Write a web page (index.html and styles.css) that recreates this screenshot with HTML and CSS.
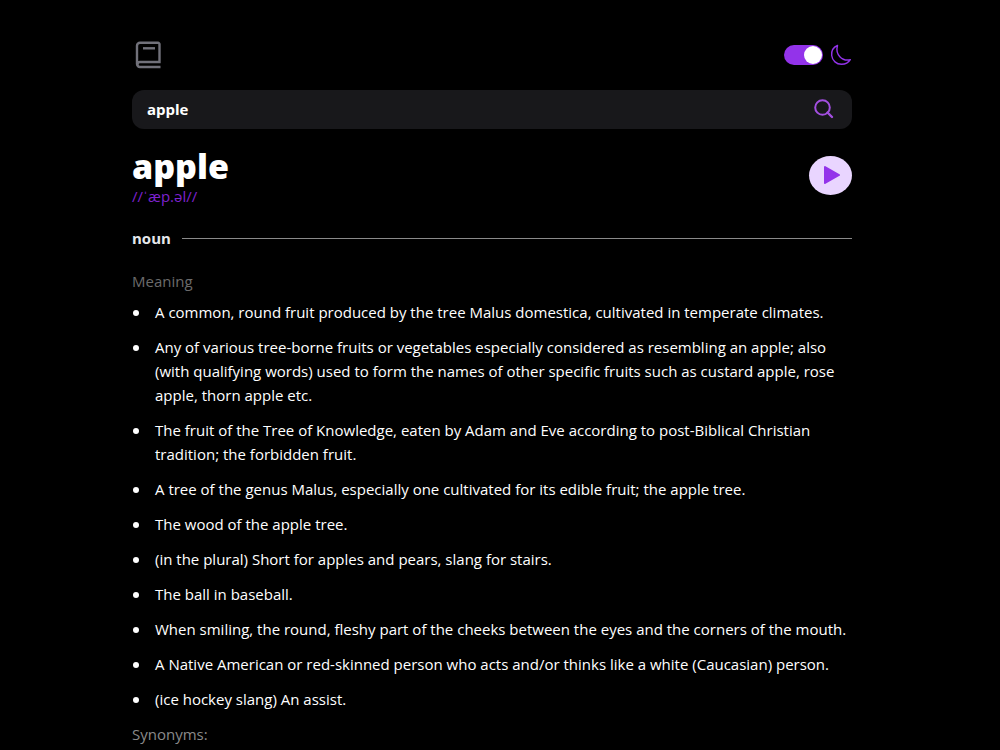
FILE: index.html
```html
<!DOCTYPE html>
<html lang="en">
<head>
    <meta charset="UTF-8">
    <meta name="viewport" content="width=device-width, initial-scale=1.0">
    <title>Dictionary</title>
    <link rel="stylesheet" href="styles.css">
</head>
<body>
    <div class="container">
        <header class="header">
            <svg class="logo" viewBox="0 0 32 32" fill="none" stroke="currentColor" stroke-width="2.4" aria-hidden="true">
                <path d="M28.5 28H8A3 3 0 0 1 5 25V6.800A3 3 0 0 1 8 3.800H26A1.500 1.500 0 0 1 27.500 5.300V23H8A2.500 2.500 0 0 0 8 28"/>
                <path d="M11 9.300h12"/>
            </svg>
            <div class="theme">
                <input type="checkbox" class="toggle" id="theme-toggle" aria-label="Dark mode" checked>
                <label for="theme-toggle" class="theme-label">
                    <svg class="moon" viewBox="0 0 22 22" fill="none" stroke="currentColor" stroke-width="1.4" stroke-linejoin="round" aria-hidden="true">
                        <path d="M7.500 1.500C3.500 3.200 1.200 7 1.700 11.500C2.300 16.800 6.500 20.300 11.500 20.300C15.500 20.300 18.800 18.200 20.300 15.700C12 17.500 5 10.500 7.500 1.500Z"/>
                    </svg>
                </label>
            </div>
        </header>

        <form class="search" role="search">
            <input type="text" class="search-input" id="word" aria-label="Search for a word" value="apple">
            <button type="submit" class="search-btn" aria-label="Search">
                <svg viewBox="0 0 20 20" fill="none" stroke="currentColor" stroke-width="2" aria-hidden="true">
                    <circle cx="8.500" cy="8.500" r="7.300"/>
                    <path d="M13.500 13.500l4.500 4.500" stroke-width="2.400" stroke-linecap="round"/>
                </svg>
            </button>
        </form>

        <main>
            <div class="word">
                <div>
                    <h1 class="word-title">apple</h1>
                    <p class="phonetic">//ˈæp.əl//</p>
                </div>
                <button type="button" class="play-btn" aria-label="Play pronunciation">
                    <svg viewBox="0 0 18 20" fill="currentColor" stroke="currentColor" stroke-width="2" stroke-linejoin="round" aria-hidden="true">
                        <path d="M3 2L17 10L3 18Z"/>
                    </svg>
                </button>
            </div>

            <section>
                <div class="part">
                    <h2 class="part-title">noun</h2>
                    <hr class="line">
                </div>
                <h3 class="subtitle">Meaning</h3>
                <ul class="meanings">
                    <li>A common, round fruit produced by the tree Malus domestica, cultivated in temperate climates.</li>
                    <li>Any of various tree-borne fruits or vegetables especially considered as resembling an apple; also (with qualifying words) used to form the names of other specific fruits such as custard apple, rose apple, thorn apple etc.</li>
                    <li>The fruit of the Tree of Knowledge, eaten by Adam and Eve according to post-Biblical Christian tradition; the forbidden fruit.</li>
                    <li>A tree of the genus Malus, especially one cultivated for its edible fruit; the apple tree.</li>
                    <li>The wood of the apple tree.</li>
                    <li>(in the plural) Short for apples and pears, slang for stairs.</li>
                    <li>The ball in baseball.</li>
                    <li>When smiling, the round, fleshy part of the cheeks between the eyes and the corners of the mouth.</li>
                    <li>A Native American or red-skinned person who acts and/or thinks like a white (Caucasian) person.</li>
                    <li>(ice hockey slang) An assist.</li>
                </ul>
                <h3 class="subtitle synonyms">Synonyms:</h3>
            </section>
        </main>
    </div>
</body>
</html>
```
FILE: styles.css
```css
:root {
    --purple: #9333ea;
    --purple-light: #e9d5ff;
    --gray: #71717a;
}

* {
    box-sizing: border-box;
    margin: 0;
    padding: 0;
}

body {
    padding: 36px 16px 0 0;
    background-color: #000;
    color: #fff;
    font-family: "Segoe UI", "Open Sans", sans-serif;
    font-size: 15px;
    line-height: 24px;
}

svg {
    display: block;
}

button {
    border: none;
    background: none;
    cursor: pointer;
}

.container {
    width: 100%;
    max-width: 720px;
    margin: 0 auto;
}

/* Header */
.header {
    display: flex;
    justify-content: space-between;
    align-items: center;
    height: 38px;
}

.logo {
    width: 32px;
    height: 32px;
    color: var(--gray);
}

.theme {
    display: flex;
    align-items: center;
    gap: 7px;
}

.toggle {
    appearance: none;
    display: flex;
    width: 39px;
    height: 20px;
    padding: 1px;
    border-radius: 10px;
    background-color: var(--gray);
    cursor: pointer;
}

.toggle::before {
    content: "";
    width: 18px;
    height: 18px;
    border-radius: 50%;
    background-color: #fff;
}

.toggle:checked {
    justify-content: flex-end;
    background-color: var(--purple);
}

.theme-label {
    color: var(--purple);
    cursor: pointer;
}

.moon {
    width: 22px;
    height: 22px;
}

/* Search */
.search {
    display: flex;
    align-items: center;
    height: 39px;
    margin-top: 16px;
    padding: 0 18px 1px 15px;
    border-radius: 12px;
    background-color: #18181b;
}

.search-input {
    flex: 1;
    min-width: 0;
    border: none;
    outline: none;
    background: none;
    color: #fff;
    font: inherit;
    font-weight: 700;
}

.search-btn {
    color: #a34fe0;
}

.search-btn svg {
    width: 20px;
    height: 20px;
}

/* Word */
.word {
    display: flex;
    justify-content: space-between;
    align-items: center;
    margin-top: 16px;
}

.word-title {
    font-size: 34px;
    font-weight: 800;
    line-height: 42px;
}

.phonetic {
    color: #7e22ce;
    font-size: 15px;
    line-height: 18px;
}

.play-btn {
    display: flex;
    justify-content: center;
    align-items: center;
    width: 43px;
    height: 39px;
    border-radius: 50%;
    background-color: var(--purple-light);
    color: var(--purple);
}

.play-btn svg {
    width: 18px;
    height: 20px;
}

/* Meanings */
.part {
    display: flex;
    align-items: center;
    gap: 11px;
    margin: 21px 0 19px;
}

.part-title {
    color: #e5e7eb;
    font-size: 15px;
    font-weight: 700;
}

.line {
    flex: 1;
    border: none;
    border-top: 1px solid #8a8a8a;
}

.subtitle {
    color: #6b6b6b;
    font-size: 15px;
    font-weight: 400;
}

.synonyms {
    color: #8a8a8a;
}

.meanings {
    margin: 7px 0 11px;
    list-style: none;
}

.meanings li {
    display: flex;
    gap: 16px;
}

.meanings li + li {
    margin-top: 11px;
}

.meanings li::before {
    content: "";
    flex: none;
    width: 6px;
    height: 6px;
    margin: 10px 0 0 1px;
    border-radius: 50%;
    background-color: #fff;
}
```
